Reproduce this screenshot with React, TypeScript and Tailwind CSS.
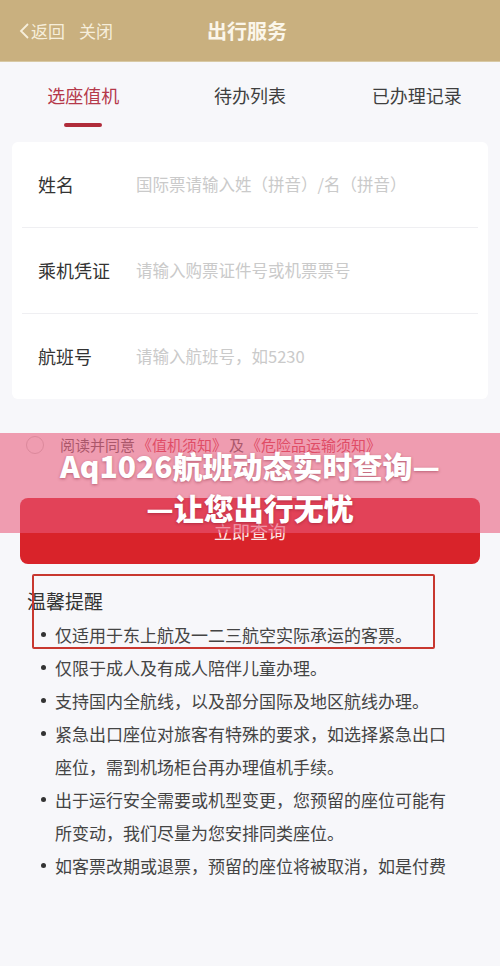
import React from "react";

const font = { fontFamily: '"Noto Sans CJK SC", "Noto Sans", sans-serif' };

const fields = [
  { label: "姓名", placeholder: "国际票请输入姓（拼音）/名（拼音）" },
  { label: "乘机凭证", placeholder: "请输入购票证件号或机票票号" },
  { label: "航班号", placeholder: "请输入航班号，如5230" },
];

const tips = [
  "仅适用于东上航及一二三航空实际承运的客票。",
  "仅限于成人及有成人陪伴儿童办理。",
  "支持国内全航线，以及部分国际及地区航线办理。",
  "紧急出口座位对旅客有特殊的要求，如选择紧急出口座位，需到机场柜台再办理值机手续。",
  "出于运行安全需要或机型变更，您预留的座位可能有所变动，我们尽量为您安排同类座位。",
  "如客票改期或退票，预留的座位将被取消，如是付费",
];

export default function App() {
  return (
    <div className="relative w-[500px] h-[966px] overflow-hidden bg-[#f7f7fa]" style={font}>
      {/* Header */}
      <div className="h-[62px] bg-[#c9b07f] border-b border-[#d8c9a4] flex items-center relative">
        <div className="flex items-center pl-[18px] text-[17px] text-[#f6eedb] gap-[14px]">
          <span className="flex items-center">
            <svg width="12" height="18" viewBox="0 0 12 18" className="mr-[1px]">
              <path d="M10 2 L3 9 L10 16" fill="none" stroke="#f6eedb" strokeWidth="1.8" />
            </svg>
            返回
          </span>
          <span>关闭</span>
        </div>
        <div className="absolute left-[207px] top-0 h-full flex items-center text-[20px] font-bold text-[#fbf6ea]">
          出行服务
        </div>
      </div>

      {/* Tabs */}
      <div className="flex h-[78px]">
        <div className="flex-1 flex flex-col items-center pt-[20px]">
          <span className="text-[18px] text-[#b5394a]">选座值机</span>
          <span className="mt-[14px] w-[38px] h-[4px] rounded-full bg-[#b02c3a]" />
        </div>
        <div className="flex-1 flex flex-col items-center pt-[20px]">
          <span className="text-[18px] text-[#3f3f3f]">待办列表</span>
        </div>
        <div className="flex-1 flex flex-col items-center pt-[20px]">
          <span className="text-[18px] text-[#3f3f3f]">已办理记录</span>
        </div>
      </div>

      {/* Form */}
      <div className="mx-[12px] mt-[2px] bg-white rounded-md">
        {fields.map((f, i) => (
          <div key={f.label}>
            {i > 0 && <div className="mx-[10px] h-px bg-[#efeff2]" />}
            <div className="h-[85px] flex items-center pl-[26px]">
              <span className="w-[98px] text-[18px] text-[#333]">{f.label}</span>
              <span className="text-[16.5px] text-[#cacaca]">{f.placeholder}</span>
            </div>
          </div>
        ))}
      </div>

      {/* Agreement */}
      <div className="flex items-center mt-[36px] pl-[26px] h-[20px] text-[15px]">
        <span className="w-[18px] h-[18px] rounded-full border border-[#c9c9c9] mr-[16px]" />
        <span className="text-[#555]">阅读并同意</span>
        <span className="text-[#d33a4a] ml-[2px]">《值机须知》</span>
        <span className="text-[#555] mx-[2px]">及</span>
        <span className="text-[#d33a4a]">《危险品运输须知》</span>
      </div>

      {/* Button */}
      <div className="mx-[20px] mt-[43px] h-[66px] rounded-lg bg-[#d9232a] flex items-center justify-center text-[18px] text-[#fbe4e4]">
        立即查询
      </div>

      {/* Tips */}
      <div className="relative mt-[10px] pl-[27px]">
        <div className="text-[19px] text-[#333] leading-[28px] pt-[13px]">温馨提醒</div>
        <ul className="mt-[3px] pl-[14px] text-[17px] text-[#444] leading-[33px]">
          {tips.map((t) => (
            <li key={t} className="flex">
              <span className="w-[14px] shrink-0 h-[33px] flex items-center">
                <span className="w-[5px] h-[5px] rounded-full bg-[#333]" />
              </span>
              <span className="w-[402px]">{t}</span>
            </li>
          ))}
        </ul>
        <div className="absolute left-[32px] top-0 w-[403px] h-[75px] border-2 border-[#c8372f] rounded-[2px]" />
      </div>

      {/* Overlay band */}
      <div className="absolute left-0 top-[433px] w-[500px] h-[100px] bg-[rgba(232,90,122,0.58)] flex flex-col items-center justify-center">
        <div
          className="text-white text-[30px] font-black leading-[42px] text-center pt-[6px]"
          style={{ textShadow: "0 1px 3px rgba(120,20,40,0.45)" }}
        >
          Aq1026航班动态实时查询—
          <br />—让您出行无忧
        </div>
      </div>
    </div>
  );
}
